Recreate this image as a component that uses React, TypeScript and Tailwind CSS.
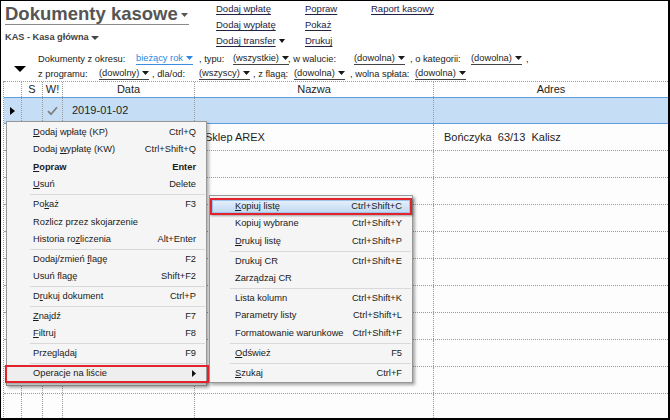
import React from "react";

const Tri = ({ color = "#222", className = "", w = 7, h = 4 }: { color?: string; className?: string; w?: number; h?: number }) => (
  <svg width={w} height={h} viewBox={`0 0 ${w} ${h}`} className={className}>
    <path d={`M0 0H${w}L${w / 2} ${h}Z`} fill={color} />
  </svg>
);

const Val = ({ children, blue = false }: { children: React.ReactNode; blue?: boolean }) => (
  <span
    className={`inline-flex items-center h-[12px] border-b ${blue ? "border-[#3a8de0] text-[#2f86de]" : "border-[#444] text-[#222]"}`}
  >
    {children}
    <Tri color={blue ? "#2f86de" : "#1a1a1a"} className="ml-[3px]" />
  </span>
);

type Seg = { w?: number; t: React.ReactNode; v?: boolean; blue?: boolean };

const row1: Seg[] = [
  { w: 98, t: "Dokumenty z okresu:" },
  { w: 63, t: "bieżący rok", v: true, blue: true },
  { w: 34, t: ", typu:" },
  { w: 55, t: "(wszystkie)", v: true },
  { w: 66, t: ", w walucie:" },
  { w: 56, t: "(dowolna)", v: true },
  { w: 61, t: ", o kategorii:" },
  { w: 55, t: "(dowolna)", v: true },
  { t: "," },
];

const row2: Seg[] = [
  { w: 61, t: "z programu:" },
  { w: 53, t: "(dowolny)", v: true },
  { w: 47, t: ", dla/od:" },
  { w: 54, t: "(wszyscy)", v: true },
  { w: 41, t: ", z flagą:" },
  { w: 56, t: "(dowolna)", v: true },
  { w: 65, t: ", wolna spłata:" },
  { t: "(dowolna)", v: true },
];

const FilterRow = ({ segs }: { segs: Seg[] }) => (
  <div className="flex items-center h-[15px] text-[9.3px] leading-[12px] text-[#222] whitespace-nowrap">
    {segs.map((s, i) => (
      <div key={i} className="shrink-0 flex items-center" style={s.w ? { width: s.w } : undefined}>
        {s.v ? <Val blue={s.blue}>{s.t}</Val> : <span>{s.t}</span>}
      </div>
    ))}
  </div>
);

type MI = "sep" | { l: React.ReactNode; s?: string; b?: boolean; arrow?: boolean; boxed?: boolean; hl?: boolean };

const mainMenu: MI[] = [
  { l: <><u>D</u>odaj wpłatę (KP)</>, s: "Ctrl+Q" },
  { l: <>Dodaj <u>w</u>ypłatę (KW)</>, s: "Ctrl+Shift+Q" },
  { l: <><u>P</u>opraw</>, s: "Enter", b: true },
  { l: <><u>U</u>suń</>, s: "Delete" },
  "sep",
  { l: <>Po<u>k</u>aż</>, s: "F3" },
  { l: <>Rozlicz przez skojarzenie</> },
  { l: <>Historia ro<u>z</u>liczenia</>, s: "Alt+Enter" },
  "sep",
  { l: <>Dodaj/zmień <u>f</u>lagę</>, s: "F2" },
  { l: <>Usuń fla<u>g</u>ę</>, s: "Shift+F2" },
  "sep",
  { l: <>D<u>r</u>ukuj dokument</>, s: "Ctrl+P" },
  "sep",
  { l: <><u>Z</u>najdź</>, s: "F7" },
  { l: <><u>F</u>iltruj</>, s: "F8" },
  "sep",
  { l: <>Przeglądaj</>, s: "F9" },
  "sep",
  { l: <>Operacje na liście</>, arrow: true, boxed: true },
];

const subMenu: MI[] = [
  { l: <><u>K</u>opiuj listę</>, s: "Ctrl+Shift+C", hl: true },
  { l: <>Kopiuj wybrane</>, s: "Ctrl+Shift+Y" },
  { l: <><u>D</u>rukuj listę</>, s: "Ctrl+Shift+P" },
  "sep",
  { l: <>Drukuj CR</>, s: "Ctrl+Shift+E" },
  { l: <>Zarządzaj CR</> },
  "sep",
  { l: <>Lista kolumn</>, s: "Ctrl+Shift+K" },
  { l: <>Parametry listy</>, s: "Ctrl+Shift+L" },
  { l: <>Formatowanie warunkowe</>, s: "Ctrl+Shift+F" },
  "sep",
  { l: <><u>O</u>dśwież</>, s: "F5" },
  "sep",
  { l: <><u>S</u>zukaj</>, s: "Ctrl+F" },
];

const MenuItems = ({ items, pl, sepMl }: { items: MI[]; pl: string; sepMl: string }) => (
  <>
    {items.map((it, i) =>
      it === "sep" ? (
        <div key={i} className="h-[2.5px] flex items-center">
          <div className={`h-px flex-1 bg-[#d9d9d9] mr-[1px] ${sepMl}`} />
        </div>
      ) : (
        <div
          key={i}
          className={`relative h-[17.4px] flex items-center justify-between ${pl} pr-[10px] text-[9.3px] leading-none text-[#1a1a1a] whitespace-nowrap [&_u]:underline-offset-[1px] ${
            it.b ? "font-bold" : ""
          } ${it.boxed ? "bg-[#eeeeee]" : ""}`}
        >
          {it.hl && (
            <div className="absolute inset-0 border-2 border-[#e3232b] shadow-[1px_1px_2px_rgba(0,0,0,0.35)]">
              <div className="w-full h-full bg-gradient-to-b from-[#e3effb] to-[#c3dbf3] border border-[#9cc4ea]" />
            </div>
          )}
          <span className="relative">{it.l}</span>
          {it.s && <span className="relative">{it.s}</span>}
          {it.arrow && (
            <svg width="4" height="7" viewBox="0 0 4 7" className="relative">
              <path d="M0 0L4 3.5L0 7Z" fill="#111" />
            </svg>
          )}
          {it.boxed && (
            <div className="absolute -left-[2px] -right-[3px] top-0 -bottom-[1px] border-2 border-[#e3232b] shadow-[1px_2px_3px_rgba(0,0,0,0.35)]" />
          )}
        </div>
      )
    )}
  </>
);

const cols = "grid grid-cols-[18px_21px_20px_132px_239px_1fr]";
const cell = "border-r border-dotted border-[#9a9a9a]";

export default function App() {
  const emptyRows = Array.from({ length: 11 });
  return (
    <div className="relative w-[670px] h-[420px] overflow-hidden bg-white border-t border-l border-r-2 border-b-2 border-black font-['Liberation_Sans',Arial,sans-serif]">
      {/* top section */}
      <div className="flex h-[50px]">
        <div className="w-[215px] pl-[4px] shrink-0">
          <div className="mt-[2.6px] inline-flex items-center h-[21px] border-b border-[#8a8a8a] pr-[1px]">
            <span className="text-[18.5px] leading-[20px] font-bold text-[#555555]">Dokumenty kasowe</span>
            <Tri color="#555" w={7} h={4} className="ml-[3px] mt-[2px]" />
          </div>
          <div className="mt-[5.4px] flex items-center h-[12px] text-[9.2px] font-bold text-[#444]">
            <span>KAS - Kasa główna</span>
            <Tri color="#444" w={8} h={4} className="ml-[2px]" />
          </div>
        </div>
        <div className="grid grid-cols-[89px_66px_auto] text-[9.5px] leading-[16px] text-[#222244] [&_span]:underline [&_span]:underline-offset-[2px]">
          <div className="flex flex-col">
            <span>Dodaj wpłatę</span>
            <span>Dodaj wypłatę</span>
            <div className="flex items-center">
              <span>Dodaj transfer</span>
              <Tri color="#111" w={6} h={4} className="ml-[3px]" />
            </div>
          </div>
          <div className="flex flex-col">
            <span>Popraw</span>
            <span>Pokaż</span>
            <span>Drukuj</span>
          </div>
          <div className="flex flex-col">
            <span>Raport kasowy</span>
          </div>
        </div>
      </div>

      {/* filters */}
      <div className="flex h-[30px]">
        <div className="w-[37px] shrink-0">
          <Tri color="#000" w={12} h={6} className="ml-[13px] mt-[15px]" />
        </div>
        <div className="flex flex-col">
          <FilterRow segs={row1} />
          <FilterRow segs={row2} />
        </div>
      </div>

      {/* table */}
      <div className="ml-[2px] border-l border-dotted border-[#9a9a9a] text-[11px] text-[#1e1e1e]">
        <div className={`${cols} h-[16px] border-t border-dotted border-[#9a9a9a] leading-[15px] text-center`}>
          <div className={cell} />
          <div className={cell}>S</div>
          <div className={cell}>W!</div>
          <div className={cell}>Data</div>
          <div className={cell}>Nazwa</div>
          <div>Adres</div>
        </div>
        <div className={`${cols} h-[27px] bg-[#c5def5] border-y border-[#5d9fdc]`}>
          <div className={`${cell} flex items-center pl-[6px]`}>
            <svg width="5" height="8" viewBox="0 0 5 8">
              <path d="M0 0L5 4L0 8Z" fill="#000" />
            </svg>
          </div>
          <div className={cell} />
          <div className={`${cell} flex items-center justify-center`}>
            <svg width="11" height="10" viewBox="0 0 11 10">
              <path d="M1 5.2L4 8.3L10 1.2" fill="none" stroke="#7d7d7d" strokeWidth="1.7" />
            </svg>
          </div>
          <div className={`${cell} flex items-center pl-[9px]`}>2019-01-02</div>
          <div className={cell} />
          <div />
        </div>
        {emptyRows.map((_, i) => (
          <div key={i} className={`${cols} h-[27px] border-b border-dotted border-[#9a9a9a] bg-[#fdfdfd]`}>
            <div className={cell} />
            <div className={cell} />
            <div className={cell} />
            <div className={cell} />
            <div className={`${cell} flex items-center pl-[10px]`}>{i === 0 ? "Sklep AREX" : ""}</div>
            <div className="flex items-center pl-[10px] whitespace-pre">{i === 0 ? "Bończyka  63/13  Kalisz" : ""}</div>
          </div>
        ))}
      </div>

      {/* context menu */}
      <div className="absolute left-[5px] top-[120px] w-[201px] h-[265px] border border-[#979797] bg-[#f5f5f5] py-[2px] shadow-[2px_2px_3px_rgba(0,0,0,0.3)]">
        <MenuItems items={mainMenu} pl="pl-[26px]" sepMl="ml-[23px]" />
      </div>

      {/* submenu */}
      <div className="absolute left-[208px] top-[194px] w-[204px] h-[188px] border border-[#979797] bg-[#f5f5f5] py-[2px] shadow-[2px_2px_3px_rgba(0,0,0,0.35)]">
        <MenuItems items={subMenu} pl="pl-[25px]" sepMl="ml-[20px]" />
      </div>
    </div>
  );
}
